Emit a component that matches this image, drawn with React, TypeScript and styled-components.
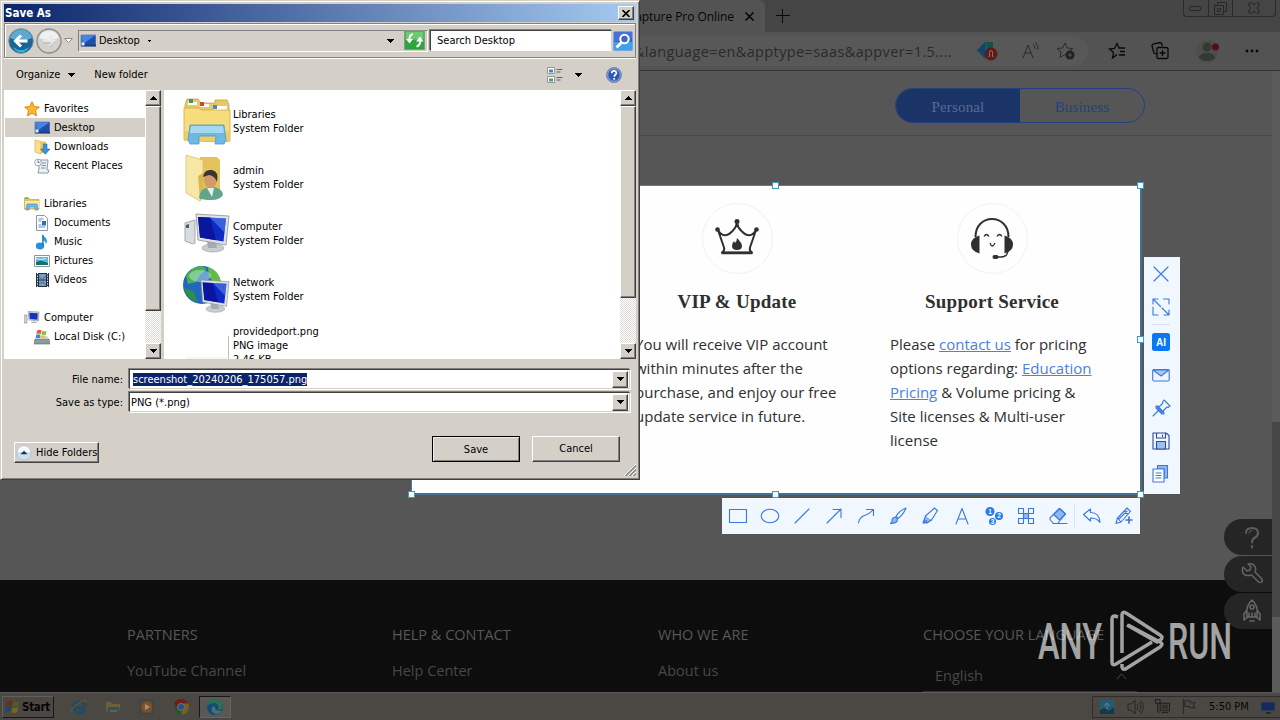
import React from 'react';
import styled, { createGlobalStyle } from 'styled-components';

interface IconProps {
  name: string;
  size?: number;
}

interface TreeItem {
  label: string;
  icon: string;
  level: number;
  active?: boolean;
  spaced?: boolean;
}

interface FileItem {
  name: string;
  kind: string;
  size?: string;
  icon: string;
}

const GlobalStyle = createGlobalStyle`
* { box-sizing: border-box; }
body { margin: 0; background: #565656; overflow: hidden; }
svg { display: block; flex: none; }
`;

const ui = `font-family: "DejaVu Sans Condensed", "DejaVu Sans", sans-serif; font-stretch: condensed;`;

/* ---------- browser ---------- */

const Screen = styled.div`
position: relative;
width: 1280px;
height: 720px;
overflow: hidden;
display: flex;
flex-direction: column;
background: #565656;
font-family: "Open Sans", sans-serif;
`;

const TabBar = styled.div`
display: flex;
height: 32px;
background: #454545;
justify-content: space-between;
`;

const Tab = styled.div`
display: flex;
align-items: center;
justify-content: flex-end;
gap: 10px;
width: 765px;
padding-right: 10px;
background: #535353;
border-top-right-radius: 6px;
font-size: 12px;
letter-spacing: -0.05px;
color: #050505;
white-space: nowrap;
`;

const NewTab = styled.div`
flex: 1;
padding: 8px 0 0 10px;
`;

const WindowButtons = styled.div`
display: flex;
width: 93px;
height: 17px;
margin-right: 4px;
border: 1px solid #2b2b2b;
border-top: 0;
border-radius: 0 0 4px 4px;
`;

const WindowButton = styled.div<{ $width: number }>`
display: flex;
align-items: center;
justify-content: center;
width: ${props => props.$width}px;
border-right: 1px solid #2b2b2b;
&:last-child { border-right: 0; }
`;

const AddressBar = styled.div`
display: flex;
align-items: center;
height: 39px;
background: #535353;
border-bottom: 1px solid #343434;
`;

const AddressField = styled.div`
display: flex;
align-items: center;
width: 1088px;
height: 30px;
background: #585858;
border-radius: 15px;
`;

const Url = styled.div`
width: 952px;
text-align: right;
font-size: 14.5px;
letter-spacing: 0.38px;
color: #2a2a2a;
white-space: nowrap;
`;

const IconSlot = styled.div<{ $left: number }>`
margin-left: ${props => props.$left}px;
`;

const Viewport = styled.div`
display: flex;
flex: 1;
min-height: 0;
`;

const Site = styled.div`
display: flex;
flex-direction: column;
width: 1272px;
`;

const ScrollTrack = styled.div`
width: 8px;
padding-top: 351px;
background: #5b5b5b;
`;

const ScrollThumb = styled.div`
height: 195px;
background: #474747;
`;

const SiteHeader = styled.div`
display: flex;
justify-content: flex-end;
height: 65px;
padding: 17px 127px 0 0;
border-bottom: 1px solid #4a4a4a;
`;

const PlanSwitch = styled.div`
display: flex;
width: 250px;
height: 35px;
border: 1px solid #25407f;
border-radius: 18px;
overflow: hidden;
`;

const PlanOption = styled.div<{ $active?: boolean }>`
flex: 1;
line-height: 37px;
text-align: center;
font-family: "Liberation Serif", serif;
font-size: 15px;
letter-spacing: 0.15px;
color: ${props => (props.$active ? '#576a91' : '#25407f')};
background: ${props => (props.$active ? '#1b3468' : 'transparent')};
`;

const SiteBody = styled.div`
flex: 1;
`;

const Footer = styled.div`
display: grid;
grid-template-columns: 265px 266px 265px 214px;
height: 112px;
padding: 43px 0 0 127px;
background: #0d0d0d;
`;

const FooterColumn = styled.div`
display: flex;
flex-direction: column;
font-size: 14.5px;
line-height: 24px;
color: #484848;
white-space: nowrap;
`;

const FooterTitle = styled.div`
margin-bottom: 12px;
color: #575757;
`;

const Language = styled.div`
display: flex;
justify-content: space-between;
align-items: center;
margin-top: 5px;
padding: 0 10px 3px 12px;
border-bottom: 1px solid #343434;
`;

const Taskbar = styled.div`
display: flex;
align-items: center;
height: 28px;
padding-left: 2px;
background: #4b4844;
border-top: 1px solid #5e5a56;
`;

const StartButton = styled.div`
display: flex;
align-items: center;
width: 52px;
height: 22px;
padding-left: 2px;
gap: 1px;
border: 1px solid;
border-color: #625e5a #181715 #181715 #625e5a;
font-family: "DejaVu Sans Condensed", "DejaVu Sans", sans-serif;
font-size: 11.5px;
font-weight: bold;
letter-spacing: -0.3px;
color: #050505;
`;

const QuickLaunch = styled.div`
display: flex;
align-items: center;
gap: 18px;
flex: 1;
padding-left: 17px;
`;

const ActiveTask = styled.div`
display: flex;
align-items: center;
justify-content: center;
width: 32px;
height: 22px;
margin-left: -8px;
background: #5a5855;
border: 1px solid;
border-color: #181715 #66625e #66625e #181715;
`;

const Tray = styled.div`
display: flex;
align-items: center;
width: 188px;
height: 22px;
padding-left: 6px;
gap: 11px;
border: 1px solid #2f2d2b;
border-right: 0;
${ui}
font-size: 11px;
color: #050505;
white-space: nowrap;
`;

const TrayClock = styled.span`
margin: 0 0 0 2px;
`;

const SideButtons = styled.div`
position: absolute;
top: 519px;
right: 8px;
display: flex;
flex-direction: column;
gap: 1px;
`;

const SideButton = styled.div`
display: flex;
align-items: center;
justify-content: center;
width: 48px;
height: 36px;
padding-left: 7px;
background: #252525;
border-radius: 18px 0 0 18px;
`;

const Watermark = styled.div`
position: absolute;
left: 1036px;
top: 608px;
opacity: 0.62;
`;

/* ---------- capture area ---------- */

const Capture = styled.div`
position: absolute;
left: 411px;
top: 185px;
width: 731px;
height: 310px;
display: grid;
grid-template-columns: 255px 204px;
padding: 17px 0 0 223px;
background: #fefefe;
border: 1px solid #3b86b3;
border-right: 2px solid #3f7292;
border-bottom: 2px solid #3f7292;
`;

const Handle = styled.div<{ $x: number; $y: number }>`
position: absolute;
left: ${props => props.$x - 3}px;
top: ${props => props.$y - 3}px;
width: 7px;
height: 7px;
background: #f4feff;
border: 1px solid #4796ba;
`;

const Feature = styled.div`
display: flex;
flex-direction: column;
align-items: center;
width: 204px;
`;

const FeatureIcon = styled.div`
display: flex;
align-items: center;
justify-content: center;
width: 71px;
height: 71px;
border: 1px solid #f1f1f1;
border-radius: 50%;
`;

const FeatureTitle = styled.h3`
margin: 16px 0 18px;
line-height: 24px;
font-family: "Liberation Serif", serif;
font-size: 19px;
letter-spacing: 0.25px;
color: #2f2f2f;
white-space: nowrap;
`;

const FeatureText = styled.p`
margin: 0;
width: 210px;
align-self: flex-start;
font-size: 15px;
line-height: 24px;
color: #2f2f2f;
white-space: nowrap;
a { color: #4a80e2; text-decoration: underline; }
`;

const Tools = styled.div<{ $vertical?: boolean }>`
position: absolute;
left: ${props => (props.$vertical ? 1144 : 722)}px;
top: ${props => (props.$vertical ? 257 : 498)}px;
width: ${props => (props.$vertical ? 36 : 418)}px;
height: ${props => (props.$vertical ? 237 : 36)}px;
display: flex;
flex-direction: ${props => (props.$vertical ? 'column' : 'row')};
background: #f0f7fe;
`;

const Tool = styled.div<{ $vertical?: boolean }>`
display: flex;
align-items: center;
justify-content: center;
width: ${props => (props.$vertical ? 34 : 32)}px;
height: ${props => (props.$vertical ? 33 : 36)}px;
`;

const ToolDivider = styled.div<{ $vertical?: boolean }>`
width: ${props => (props.$vertical ? '18px' : '1px')};
height: ${props => (props.$vertical ? '1px' : '24px')};
margin: ${props => (props.$vertical ? '1px 8px 0' : '6px 1px 0 0')};
background: #dbe4ee;
`;

/* ---------- save dialog ---------- */

const Dialog = styled.div`
position: absolute;
left: 0;
top: 0;
width: 640px;
height: 480px;
display: flex;
flex-direction: column;
padding: 2px;
background: #d4d0c8;
border: 1px solid;
border-color: #d4d0c8 #404040 #404040 #d4d0c8;
box-shadow: inset 1px 1px 0 #fff, inset -1px -1px 0 #808080;
${ui}
font-size: 11px;
color: #000;
white-space: nowrap;
`;

const TitleBar = styled.div`
display: flex;
align-items: center;
justify-content: space-between;
height: 18px;
margin: 1px 1px 0;
padding: 0 2px 0 1px;
background: linear-gradient(90deg, #0a246a, #a6caf0);
color: #fff;
font-weight: bold;
font-size: 11.5px;
`;

const raised = `
background: #d4d0c8;
border: 1px solid;
border-color: #fff #404040 #404040 #fff;
box-shadow: inset -1px -1px 0 #808080;
`;

const CloseButton = styled.div`
display: flex;
align-items: center;
justify-content: center;
width: 16px;
height: 14px;
${raised}
`;

const NavBar = styled.div`
display: flex;
align-items: center;
height: 35px;
margin: 1px 1px 0;
border: 1px solid #808080;
border-bottom-color: #808080;
box-shadow: 0 1px 0 #fff, inset 1px 1px 0 #fff;
padding-left: 3px;
`;

const PathBox = styled.div`
display: flex;
align-items: center;
width: 350px;
height: 22px;
margin-left: 5px;
padding-left: 1px;
border: 1px solid;
border-color: #808080 #fff #fff #808080;
`;

const PathLabel = styled.span`
margin: 0 7px 0 3px;
`;

const PathDrop = styled.div`
margin-left: auto;
padding-right: 33px;
`;

const NavButton = styled.div<{ $left: number }>`
margin-left: ${props => props.$left}px;
`;

const SearchBox = styled.div`
width: 182px;
height: 21px;
margin-left: 5px;
padding-left: 6px;
line-height: 19px;
background: #fff;
border: 1px solid;
border-color: #404040 #d4d0c8 #fff #404040;
box-shadow: -1px -1px 0 #808080;
`;

const CommandBar = styled.div`
display: flex;
align-items: center;
height: 31px;
padding: 0 15px 0 13px;
margin-top: 1px;
`;

const Organize = styled.div`
display: flex;
align-items: center;
gap: 8px;
margin-right: 19px;
`;

const ViewTools = styled.div`
display: flex;
align-items: center;
gap: 12px;
margin-left: auto;
`;

const Panes = styled.div`
display: flex;
height: 269px;
margin: 0 1px;
`;

const Tree = styled.div`
width: 141px;
padding-top: 9px;
background: #fff;
`;

const TreeRow = styled.div<{ $level: number; $active?: boolean; $spaced?: boolean }>`
display: flex;
align-items: center;
gap: 4px;
height: 19px;
margin: ${props => (props.$spaced ? 19 : 0)}px 0 0 1px;
padding-left: ${props => (props.$level ? 29 : 19)}px;
background: ${props => (props.$active ? '#d4d0c8' : 'transparent')};
`;

const Scrollbar = styled.div`
display: flex;
flex-direction: column;
width: 16px;
background: repeating-conic-gradient(#fff 0 25%, #dedbd5 0 50%) 0 0 / 2px 2px;
`;

const ScrollArrow = styled.div`
display: flex;
align-items: center;
justify-content: center;
width: 16px;
height: 16px;
${raised}
`;

const ScrollGrip = styled.div<{ $height: number }>`
width: 16px;
height: ${props => props.$height}px;
margin-bottom: auto;
${raised}
`;

const FileList = styled.div`
width: 457px;
margin-left: 2px;
padding: 4px 0 0 19px;
background: #fff;
border-left: 1px solid #d4d0c8;
overflow: hidden;
`;

const FileRow = styled.div`
display: flex;
align-items: center;
gap: 2px;
height: 56px;
line-height: 14px;
`;

const Form = styled.div`
display: flex;
flex-direction: column;
gap: 3px;
padding: 10px 7px 0 11px;
`;

const FormRow = styled.div`
display: flex;
align-items: center;
justify-content: flex-end;
gap: 6px;
`;

const Combo = styled.div`
display: flex;
align-items: center;
justify-content: space-between;
width: 501px;
height: 20px;
padding: 0 1px 0 1px;
background: #fff;
border: 1px solid;
border-color: #404040 #d4d0c8 #d4d0c8 #404040;
box-shadow: -1px -1px 0 #808080, 1px 1px 0 #fff;
`;

const ComboButton = styled.div`
display: flex;
align-items: center;
justify-content: center;
width: 16px;
height: 17px;
${raised}
`;

const Selected = styled.span`
margin-left: 2px;
line-height: 13px;
background: #0a246a;
color: #fff;
`;

const Actions = styled.div`
display: flex;
align-items: flex-start;
gap: 12px;
padding: 24px 17px 0 11px;
`;

const HideFolders = styled.div`
display: flex;
align-items: center;
gap: 4px;
width: 85px;
height: 21px;
margin: 6px auto 0 0;
padding-left: 1px;
${raised}
`;

const ActionButton = styled.div<{ $primary?: boolean }>`
width: 88px;
height: 26px;
line-height: ${props => (props.$primary ? 26 : 24)}px;
text-align: center;
${raised}
${props => props.$primary && 'border-color: #000; box-shadow: inset 1px 1px 0 #eee, inset -1px -1px 0 #808080;'}
`;

const Grip = styled.div`
position: absolute;
right: 3px;
bottom: 3px;
`;

/* ---------- icons ---------- */

const blue = '#3b78de';

const Arrow = ({ up, small }: { up?: boolean; small?: boolean }) => (
  <svg width={small ? 5 : 7} height="4" viewBox="0 0 8 4" shapeRendering="crispEdges">
    <path d={up ? 'M0 4h8L4 0z' : 'M0 0h8L4 4z'} fill="#000" />
  </svg>
);

const Monitor = ({ x = 0, y = 0 }: { x?: number; y?: number }) => (
  <g transform={`translate(${x} ${y})`}>
    <ellipse cx="22" cy="34" rx="11" ry="4" fill="#c9ccd0" stroke="#979ba1" strokeWidth=".6" />
    <path d="M16 27l9 1 1 6H17z" fill="#a6abb2" />
    <path d="M5 0l33 2-3 29-28-5z" fill="#dfe2e5" stroke="#8d9198" strokeWidth=".8" />
    <path d="M7 3l28 1.500-2.500 23L9 23.500z" fill="#0d2bc4" />
    <path d="M7 3l12 .6 6 22.700L9 23.500z" fill="#0a169e" />
    <path d="M19 3.600l16 .9-1.500 14z" fill="#5d83ec" opacity=".6" />
  </g>
);

// each entry: [native size, drawing]
const icons: Record<string, [number, React.ReactNode]> = {
  desktop: [16, <>
    <path d="M1 2h15v11H1z" fill="#1d50ad" stroke="#7893b9" />
    <path d="M1.500 2.500H15L3 11z" fill="#4686e0" />
    <path d="M1 11.500h15v2H1z" fill="#223d70" />
    <path d="M1.500 9.500h3v3h-3z" fill="#d8edff" />
  </>],
  star: [16, <path d="M8 .7l2.200 4.800 5.200.6-3.900 3.500 1.100 5.300L8 12.200l-4.600 2.700 1.100-5.300L.6 6.100l5.200-.6z" fill="#fbb62d" stroke="#d98b1c" />],
  downloads: [16, <>
    <path d="M1 1l6 1.500V15l-6-2z" fill="#f8e08a" stroke="#cda63c" strokeWidth=".6" />
    <path d="M7 2.500h5V14H7z" fill="#e8c456" />
    <path d="M9.500 5h3.500v5h3l-4.700 5.300L6.600 10h2.900z" fill="#3a93df" stroke="#1f67ad" strokeWidth=".6" />
  </>],
  recent: [16, <>
    <path d="M5 2h9l-1 10h2l-1 3H4l1-4z" fill="#eef1f4" stroke="#8b9aa8" />
    <path d="M7.500 5h4.500M7.500 7.500h4.500M7 10h4.500" stroke="#6d93b8" />
    <circle cx="4" cy="4.500" r="3.300" fill="#fff" stroke="#9aa3ad" />
    <path d="M4 2.500v2h1.500" stroke="#4b5e73" fill="none" />
  </>],
  libraries: [16, <>
    <path d="M0 2h5l1 1.500h9V13H0z" fill="#eac85c" stroke="#b79442" strokeWidth=".6" />
    <path d="M1 5h14v7H1z" fill="#f8e9a2" />
    <path d="M1 1.500h3v1.200H1z" fill="#4ca04c" />
    <path d="M3 8h10l1 6h-3v-3H5v3H2z" fill="#72b8e4" stroke="#3a86bd" strokeWidth=".6" />
  </>],
  documents: [16, <>
    <path d="M2.500.5h8l3 3v12h-11z" fill="#fff" stroke="#8598b0" />
    <path d="M4.500 4h5M4.500 6h3M4.500 10h3M4.500 12h7" stroke="#6d8fb8" />
    <path d="M8 6h4v4.500H8z" fill="#2c6fba" />
  </>],
  music: [16, <>
    <path d="M8 0c1 3 5 3 5 7 0 1.500-.6 2.400-1.500 3C12 7.500 10 6.500 9.200 6.500V12z" fill="#2f9ae2" />
    <ellipse cx="6" cy="12" rx="4.200" ry="3.400" fill="#2b8ed8" />
    <path d="M8.300 1h1.300v11H8.300z" fill="#1d72b8" />
  </>],
  pictures: [16, <>
    <path d="M.5 2.500h15v11H.5z" fill="#fff" stroke="#8598a8" />
    <path d="M2 4h12v8H2z" fill="#5cb7e4" />
    <path d="M2 9l5-1.500 7 2.500v2H2z" fill="#1b6f6b" />
    <path d="M2 5.500l5 1 5-1" stroke="#d9f2fb" fill="none" />
  </>],
  videos: [16, <>
    <path d="M2 1h13v14H2z" fill="#24303f" />
    <path d="M5 2h7v5.500H5zM5 8.500h7V14H5z" fill="#5fa5d9" />
    <path d="M5 5l3 2.500L12 4M5 12l4-2 3 3" stroke="#a84e41" fill="none" />
    <path d="M3.500 1v14M13.500 1v14" stroke="#e5eaf0" strokeDasharray="1.300 1.300" />
  </>],
  computer: [16, <>
    <path d="M0 5h3v8H0z" fill="#cfd5dc" stroke="#7f8790" strokeWidth=".6" />
    <path d="M4 1.500l11 .5-.5 9L5 10z" fill="#d4dae0" stroke="#818992" strokeWidth=".6" />
    <path d="M5.300 2.800l8.500.4-.4 6.500-7.600-.7z" fill="#1534bb" />
    <path d="M7 13c0-2 6-2 6 0z" fill="#b2b9c0" />
  </>],
  disk: [16, <>
    <path d="M1 10h14l1 5H0z" fill="#8d9aa0" stroke="#596468" strokeWidth=".6" />
    <path d="M1 10l3-3h9l2 3z" fill="#c9d2d5" />
    <path d="M3 1.500q2.500-1.500 4.500 0L6.800 5q-2-1.200-4.400 0z" fill="#e8582b" />
    <path d="M8.200 1.800q2 1 4.300 0L11.800 5.400q-2.300 1-4.300 0z" fill="#8abf34" />
    <path d="M2.200 5.800q2-1.200 4.300 0L5.800 9H1.700z" fill="#3c8ad8" />
    <path d="M7.300 6q2 1 4.300 0L11 9H6.800z" fill="#f6c32d" />
    <path d="M11 12h3v1.500h-3z" fill="#56c040" />
  </>],
  back: [26, <>
    <circle cx="13" cy="13" r="12.300" fill="#1b6596" stroke="#7d95a5" />
    <path d="M2 10a11.300 11.300 0 0 1 22 0q-11 5-22 0z" fill="#5fa8cf" />
    <path d="M5 19q8 7 16 0-3 5-8 5t-8-5z" fill="#35cdf3" />
    <path d="M19.500 13H8.500M13 7.500L7.500 13l5.500 5.500" stroke="#fff" strokeWidth="3" fill="none" />
  </>],
  forward: [26, <>
    <circle cx="13" cy="13" r="12" fill="#d3d2cf" stroke="#8f8f8d" strokeWidth="1.500" />
    <path d="M3 10a10.500 10.500 0 0 1 20 0q-10 4-20 0z" fill="#f0f0ef" />
    <path d="M7 13h11M13.500 8l5 5-5 5" stroke="#e9e9e8" strokeWidth="2.600" fill="none" />
    <path d="M7 15h8M14 19l5.500-6" stroke="#b2b2b0" fill="none" />
  </>],
  refresh: [21, <>
    <path d="M.5.5h20v19H.5z" fill="#2ea63c" stroke="#8a988a" />
    <path d="M1.500 1.500h18v8h-18z" fill="#6ccb70" />
    <path d="M9 4q-4 1-3.500 6M12.500 16.500q4-1 3.500-6" stroke="#fff" strokeWidth="2" fill="none" />
    <path d="M2 9h7l-3.500 4.500zM12 11.500h7.500L16 6.500z" fill="#fff" />
  </>],
  search: [20, <>
    <rect x=".5" y=".5" width="19" height="19" rx="1.500" fill="#2f69cf" stroke="#7ba2dd" />
    <path d="M1 11h18v8H1z" fill="#3ba3ec" />
    <path d="M1 1h18v6L1 11z" fill="#4b70d4" />
    <circle cx="11.500" cy="8" r="4.200" fill="#3a67c8" stroke="#fff" strokeWidth="2" />
    <path d="M8.500 11.500l-5 5" stroke="#fff" strokeWidth="2.800" />
  </>],
  views: [16, <>
    <path d="M.5.500h7v6h-7zM.5 9.500h7v6h-7z" fill="#fff" stroke="#8b98a8" />
    <path d="M2 2.500h4v3H2z" fill="#4686b8" />
    <path d="M2 11.500h4v3H2z" fill="#5e9a52" />
    <path d="M9.500 2.500h6M9.500 5h4M9.500 10.500h6M9.500 13h4" stroke="#5c646e" />
  </>],
  help: [16, <>
    <circle cx="8" cy="8" r="7.500" fill="#2c57b8" stroke="#7d8da8" />
    <circle cx="8" cy="8" r="6.300" fill="none" stroke="#b9cbe9" strokeWidth=".8" />
    <path d="M5.700 6.200C5.700 3.200 10.500 3.300 10.400 6 10.300 7.800 8.200 7.700 8.200 9.700M8.200 11v1.700" stroke="#fff" strokeWidth="1.700" fill="none" />
  </>],
  libraryBig: [48, <>
    <path d="M2 7l2-6h11l3 4h14V2h12l2 5v12H2z" fill="#e9c868" stroke="#bb9841" strokeWidth=".7" />
    <path d="M5 4h9v3H5zM17 6h9v3h-9zM30 8h14v4H30z" fill="#fff" />
    <path d="M6 1h4v4H6z" fill="#3f9a52" /><path d="M17 4h4v4h-4z" fill="#cf4634" /><path d="M30 7h4v4h-4z" fill="#438ac0" />
    <path d="M1 10h15l3 2h28v31q-8 2-46-1z" fill="#f6dd7b" stroke="#cfa945" strokeWidth=".8" />
    <path d="M2 33h44v10H2z" fill="#e9c553" opacity=".6" />
    <path d="M7 27h34l2 15-2 4h-9l1-8H16v8H7l-2-4z" fill="#6cb9e6" stroke="#4e9bca" strokeWidth=".8" />
    <path d="M8 28h32l1 7H7z" fill="#b4e0f6" opacity=".8" />
  </>],
  adminBig: [48, <>
    <path d="M17 3h16q4 1 4 5v36H17z" fill="#e5c35c" />
    <path d="M3 1l17 5v36l-3 5L3 39z" fill="#f7e7a6" stroke="#d8ba61" strokeWidth=".7" />
    <path d="M15 22l5-3v24l-3 4z" fill="#dcb64f" />
    <path d="M16 44q1-11 12-11 11 0 12 8-3 5-12 5-8 0-12-2z" fill="#60a58c" />
    <path d="M24 34h7l-2 9z" fill="#e9efe9" />
    <ellipse cx="27.500" cy="26" rx="6.500" ry="8" fill="#d19b6c" />
    <path d="M20 23q1-8 9-7 7 1 5 12-2-6-8-7z" fill="#3c3532" />
  </>],
  computerBig: [48, <>
    <path d="M2 13l10-3v23l-2 1-8-3z" fill="#d9dcdf" stroke="#878c93" strokeWidth=".7" />
    <path d="M3 15l3-1v4H3z" fill="#555b62" />
    <Monitor x={8} y={4} />
  </>],
  networkBig: [48, <>
    <circle cx="19" cy="19" r="19" fill="#1f68bd" />
    <path d="M3 10Q9 0 19 0l5 3-7 6-4 7-8 2z" fill="#4bb04d" />
    <path d="M25 1q11 4 13 15l-7 2-5-8z" fill="#63bd45" />
    <path d="M1 22l9 3 5 11q-11-2-14-14z" fill="#2f8f47" />
    <ellipse cx="17" cy="10" rx="11" ry="6" fill="#c9eef9" opacity=".45" />
    <g transform="translate(12 14) scale(.85)"><Monitor x={2} y={0} /></g>
  </>],
  fileBig: [48, <>
    <path d="M2 12h43v25H2z" fill="#fff" />
    <path d="M2 37.500h43.500V14" stroke="#bfbfbf" fill="none" />
    <path d="M3 36h41" stroke="#eee" />
  </>],
  hide: [18, <>
    <circle cx="9" cy="9" r="8" fill="#cfe0f0" stroke="#a8b8c8" strokeWidth=".7" />
    <path d="M2 8a7 7 0 0 1 14 0z" fill="#f6fafd" />
    <path d="M5 10.500h8L9 6.500z" fill="#163653" />
  </>],
  crown: [44, <>
    <g fill="none" stroke="#303030" strokeWidth="2">
      <path d="M3 13q6 10 14.500 1Q21 11 22 6q1 5 4.500 8 8.500 9 14.500-1l-6 17.500q-1 3 2 5H7q3-2 2-5z" strokeLinejoin="round" />
    </g>
    <path d="M6.500 36h31" stroke="#303030" strokeWidth="2.500" />
    <circle cx="22" cy="4.500" r="2.500" fill="#303030" /><circle cx="2.500" cy="12.500" r="2.300" fill="#303030" /><circle cx="41.500" cy="12.500" r="2.300" fill="#303030" />
    <path d="M22 21q5 5 5 8 0 4-5 4t-5-4q0-3 2-5l1 2q2-2 2-5z" fill="#303030" />
  </>],
  support: [44, <>
    <path d="M5.500 20C5.500-4 38.500-4 38.500 20" fill="none" stroke="#303030" strokeWidth="2" />
    <path d="M9.500 18.500v18Q1 34 1 27.500t8.500-9zM34.500 18.500v18Q43 34 43 27.500t-8.500-9z" fill="#303030" />
    <path d="M14 19.500q2.500-4 5 0M27 19.500q2.500-4 5 0M20 26q2 6 5 0" fill="none" stroke="#303030" strokeWidth="1.300" />
    <path d="M38 34q-1 6-7 6h-6" fill="none" stroke="#303030" strokeWidth="1.500" />
    <rect x="22.500" y="38" width="6" height="4" rx="2" fill="#303030" />
  </>],
  rect: [20, <path d="M1.500 3.500h17v13h-17z" />],
  ellipse: [20, <ellipse cx="10" cy="10" rx="8.800" ry="6.700" />],
  line: [20, <path d="M3 17L17 3" />],
  arrow: [20, <path d="M3 17L17 3M9 3.500h8v8" />],
  curve: [20, <path d="M2.500 17q1-6 6-7.500T17 4M10.500 3.500H17.500v6" />],
  brush: [20, <>
    <path d="M18 2q-7 3-10 8.500l2 2Q15 9 18 2z" />
    <path d="M7.500 11l2 2.500q0 4-7 4 1.500-1 1.500-3 0-3 3.500-3.500z" fill="#8bb8f5" />
  </>],
  marker: [20, <>
    <path d="M14.500 2l3 2.500-6 9.500-5.500.5-.5-4.500z" />
    <path d="M5.500 10L3 17h4l4.500-3M3 16l3-1.500 1 2z" fill="#8bb8f5" />
  </>],
  letter: [20, <path d="M4 18l6-15.500L16 18M6 13h8" />],
  numbers: [20, <g stroke="none" fill="#2878e8">
    <circle cx="6" cy="5.500" r="4.500" /><circle cx="15" cy="10" r="4" /><circle cx="8.500" cy="15.500" r="3.500" />
    <g fill="#fff" fontFamily="Liberation Sans, sans-serif" fontWeight="bold" fontSize="6.500" textAnchor="middle">
      <text x="6" y="8">1</text><text x="15" y="12.300">2</text><text x="8.500" y="17.800">3</text>
    </g>
  </g>],
  mosaic: [20, <>
    <path d="M7.500 7.500h5v5h-5z" fill="#8bb8f5" />
    <path d="M2.500 2.500h5v5h-5zM12.500 2.500h5v5h-5zM2.500 12.500h5v5h-5zM12.500 12.500h5v5h-5z" />
  </>],
  eraser: [20, <>
    <path d="M11.500 2.500l6 5.500-6 6-6-5.500z" fill="#8bb8f5" />
    <path d="M11.500 2.500l6 5.500-8 9.500h-4l-3.500-4v-1.500zM5 17.500h14" />
  </>],
  undo: [20, <path d="M1.500 8.500L8.500 3v3.500q9 0 9.500 10-3-4.500-9.500-4.500v3z" />],
  pencil: [20, <>
    <path d="M13 2l3.500 3.500L7 16l-5 1.500L3.500 12zM3.500 12L7 16M10.500 5l3.500 3.500M5 13l8-8" />
    <path d="M15 11v6M12 14h6" strokeWidth="1.700" />
  </>],
  close: [20, <path d="M3 3l14 14M17 3L3 17" />],
  expand: [20, <path d="M2 7V2h5M13 2h5v5M18 13v5h-5M7 18H2v-5M2.500 2.500l7 7M11 11l6.500 6.500M12.500 2H18M2 10v6" strokeDasharray="none" />],
  ai: [20, <>
    <rect x="1" y="1" width="18" height="18" rx="2.500" fill="#0878f5" stroke="none" />
    <text x="10" y="13.800" fontFamily="Liberation Sans, sans-serif" fontSize="10" fontWeight="bold" fill="#fff" stroke="none" textAnchor="middle">AI</text>
  </>],
  mail: [20, <>
    <rect x="1.700" y="4.500" width="16.500" height="11.500" rx="1.500" />
    <path d="M2 5h16l-8 6z" fill="#a9c9f7" />
  </>],
  pin: [20, <>
    <path d="M12 2l6 6-2 1.500-1-.5-3.500 3.500.5 3.500-2 0-6-6v-2l3.500.5L11 5l-.5-1z" transform="translate(1 0)" />
    <path d="M6.500 8l6 6-1 1-5.500-5.500zM7.500 12.500L2 18" fill="#6ba3f0" />
  </>],
  save: [20, <g stroke="#294f9a">
    <path d="M2 2h13l3 2.500V18H2zM5.500 2v5h9V2M11.500 4v1.500" />
    <path d="M5.500 10.500h9V18h-9z" fill="#9ec1f4" />
  </g>],
  copy: [20, <>
    <path d="M6.500 5V1.500h10v12.500H13V5z" fill="#8bb8f5" />
    <path d="M2 5h11v13H2z" fill="#fff" />
    <path d="M5 9h5M5 11.500h5M5 14h5" />
  </>],
  question: [24, <g stroke="#5d5d5d" strokeWidth="2"><path d="M6 8Q6 3 12 3q6 0 6 5 0 3-3 4.500-3 1.500-3 5M12 21v1.500" /><path d="M9 8q0-2.500 3-2.500" strokeWidth="1" /></g>],
  wrench: [24, <path d="M3 5l4 4 3-1 1-3-3-3q6-1 7.500 4 .5 2-.5 4l7 7q1 2-.5 3t-3 0l-7-7Q4 15 2.500 10 2 7 3 5z" stroke="#646464" strokeWidth="1.500" />],
  rocket: [24, <g stroke="#686868" strokeWidth="1.500">
    <path d="M12 1Q6 6 7 15v3h10v-3q1-9-5-14zM7 11l-3 4v6l4-3M17 11l3 4v6l-4-3M9 18v-4M12 18v-4M15 18v-4" /><circle cx="12" cy="8" r="2" /><path d="M10 22h4" />
  </g>],
  windows: [16, <>
    <path d="M2 2q3-1.500 5.500 0L6.500 7Q4 5.500 1 7z" fill="#6d2b18" /><path d="M8.500 2.500q3 1 6-.5l-1 5q-3 1.500-6 .5z" fill="#486023" />
    <path d="M.8 8q3-1.500 5.500 0l-1 5q-3-1.500-5.500 0z" fill="#244368" /><path d="M7.300 8.500q3 1 6-.5l-1 5q-3 1.500-6 .5z" fill="#7a6422" />
  </>],
  ie: [16, <>
    <path d="M14 9H4.500M14 9q0-6-6-6-5.500 0-5.500 5.500T8 14q4 0 5.500-3" stroke="#1c4c68" strokeWidth="2.500" fill="none" />
    <path d="M1 13Q-1 9 8 4t7-1" stroke="#6d5d25" fill="none" />
  </>],
  explorer: [16, <>
    <path d="M1 3h5l1 2h8v8H1z" fill="#6b6138" /><path d="M3 8h11l1 5h-3v-2H5v2H2z" fill="#2d5267" />
  </>],
  media: [16, <>
    <path d="M1 1h13v14H1z" fill="#514a43" stroke="#33414c" /><circle cx="8" cy="8" r="5.500" fill="#82501c" /><path d="M6 5l5 3-5 3z" fill="#9a948a" />
  </>],
  chrome: [16, <>
    <circle cx="8" cy="8" r="7.500" fill="#27562e" /><path d="M1 4.500A7.500 7.500 0 0 1 15 4.500H8L4.500 10z" fill="#6c2019" />
    <path d="M15 4.500A7.500 7.500 0 0 1 7.500 15.500L11.500 9 8 4.500z" fill="#78611b" /><circle cx="8" cy="8" r="3.500" fill="#254f87" stroke="#77756f" />
  </>],
  edge: [18, <>
    <circle cx="9" cy="9" r="8" fill="#124b72" /><path d="M1 8Q2 1 9 1t8 7q0 4-5 4 1-7-4-7-4 0-7 3z" fill="#287255" />
    <path d="M9 8q-1 5 7 5-3 4-7 3-5-2-3-7z" fill="#4d6b74" />
  </>],
  trayApp: [16, <><path d="M1 1h14v14H1z" fill="#235b72" /><path d="M1 11l4-2 5 3 5-4v7H1z" fill="#173848" /><path d="M5 7l3-3 3 3M8 4v6" stroke="#5d8796" fill="none" /></>],
  volume: [18, <path d="M2 6h3l4-4v14l-4-4H2zM11 6q2 3 0 6M13 4q3.500 5 0 10M15 2.500q4.500 6.500 0 13" fill="none" stroke="#262422" />],
  network: [16, <><path d="M5.500 4.500h10v8h-10zM7 14.500h7M.5.500h5v4h-5zM3 5v9h2" fill="none" stroke="#1d1c1a" /><path d="M7 6h7v5H7z" fill="#33312e" /></>],
  flag: [16, <path d="M2.500 0v16M4 2h6v2h5l-2 3 2 2.500H9V8H4z" fill="none" stroke="#242220" />],
  trayDesk: [16, <><path d="M1 3h14v9H1z" fill="#14295c" stroke="#3d4758" /><path d="M6 13h5v2H6z" fill="#2a2826" /></>],
  shop: [22, <>
    <path d="M1 10L9 2v17z" fill="#124567" /><path d="M9 2h8v9H9z" fill="#1b5046" /><path d="M9 2l4 8-4 9z" fill="#16587b" />
    <circle cx="15" cy="14" r="6.500" fill="#5f1b1a" /><path d="M12.500 16.500h1v-4q0-2 1.500-2t1.500 2v4h1" stroke="#8b7070" fill="none" />
  </>],
  readAloud: [18, <path d="M2 16L7 3l5 13M4 11h6M12 2q2 2 2 5M14.500.5q3 3 2.500 7" stroke="#2a2a2a" fill="none" />],
  favAdd: [20, <><path d="M9 2l2.200 5 5.300.5-4 3.500 1 5L9 13.500 4 16.500l1-5.500-4-3.500L6.500 7z" stroke="#2a2a2a" fill="none" /><circle cx="14" cy="14" r="4.500" fill="#222" /><path d="M12 14h4M14 12v4" stroke="#555" /></>],
  favorites: [18, <path d="M9 12.500L4.500 16l1-5.500L1.500 7l5-.5L9 1.500 11 6h6M12 9.500h5M11 13h6" stroke="#080808" strokeWidth="1.300" fill="none" />],
  collections: [18, <path d="M5.500 12L3 11 1 4q0-1.500 1-2l7-1.500q1.500 0 2 1.500v2M7.500 5.500h8q1.500 0 1.500 1.500v8q0 1.500-1.500 1.500h-8Q6 16.500 6 15V7q0-1.500 1.500-1.500zM11.500 8v6M8.500 11h6" stroke="#080808" strokeWidth="1.300" fill="none" />],
  profile: [24, <><circle cx="12" cy="12" r="11.500" fill="#4e4e4d" /><circle cx="12" cy="8" r="4.500" fill="#313a35" /><ellipse cx="12" cy="18" rx="8" ry="4" fill="#313a35" /><circle cx="20.500" cy="8" r="3.500" fill="#550c14" /></>],
  more: [16, <g fill="#080808"><circle cx="3" cy="8" r="1.400" /><circle cx="8" cy="8" r="1.400" /><circle cx="13" cy="8" r="1.400" /></g>],
};

function Icon({ name, size }: IconProps) {
  const [box, drawing] = icons[name];
  const s = size || box;
  return <svg width={s} height={s} viewBox={`0 0 ${box} ${box}`}>{drawing}</svg>;
}

function LineIcon({ name, size }: IconProps) {
  const [box, drawing] = icons[name];
  const s = size || box;
  return (
    <svg width={s} height={s} viewBox={`0 0 ${box} ${box}`} fill="none" stroke={blue} strokeWidth="1.1" strokeLinecap="round" strokeLinejoin="round">
      {drawing}
    </svg>
  );
}

/* ---------- data ---------- */

const tree: TreeItem[] = [
  { label: 'Favorites', icon: 'star', level: 0 },
  { label: 'Desktop', icon: 'desktop', level: 1, active: true },
  { label: 'Downloads', icon: 'downloads', level: 1 },
  { label: 'Recent Places', icon: 'recent', level: 1 },
  { label: 'Libraries', icon: 'libraries', level: 0, spaced: true },
  { label: 'Documents', icon: 'documents', level: 1 },
  { label: 'Music', icon: 'music', level: 1 },
  { label: 'Pictures', icon: 'pictures', level: 1 },
  { label: 'Videos', icon: 'videos', level: 1 },
  { label: 'Computer', icon: 'computer', level: 0, spaced: true },
  { label: 'Local Disk (C:)', icon: 'disk', level: 1 },
];

const files: FileItem[] = [
  { name: 'Libraries', kind: 'System Folder', icon: 'libraryBig' },
  { name: 'admin', kind: 'System Folder', icon: 'adminBig' },
  { name: 'Computer', kind: 'System Folder', icon: 'computerBig' },
  { name: 'Network', kind: 'System Folder', icon: 'networkBig' },
  { name: 'providedport.png', kind: 'PNG image', size: '2.46 KB', icon: 'fileBig' },
];

const drawTools = ['rect', 'ellipse', 'line', 'arrow', 'curve', 'brush', 'marker', 'letter', 'numbers', 'mosaic', 'eraser', '|', 'undo', 'pencil'];
const sideTools = ['close', 'expand', '|', 'ai', 'mail', 'pin', 'save', 'copy'];
const handles = [[363, -1], [728, -1], [728, 153], [728, 308], [363, 308], [-1, 308]];

/* ---------- parts ---------- */

function Browser() {
  return (
    <>
      <TabBar>
        <Tab>
          Capture Pro Online
          <svg width="11" height="11" viewBox="0 0 11 11"><path d="M1.500 1.500l8 8M9.500 1.500l-8 8" stroke="#050505" strokeWidth="1.600" /></svg>
        </Tab>
        <NewTab>
          <svg width="15" height="15" viewBox="0 0 15 15"><path d="M7.500 1v14M1 7.500h14" stroke="#0b0b0b" /></svg>
        </NewTab>
        <WindowButtons>
          <WindowButton $width={25}><svg width="13" height="5" viewBox="0 0 13 5"><rect x=".5" y=".5" width="11" height="4" rx="1.500" fill="none" stroke="#262626" /></svg></WindowButton>
          <WindowButton $width={25}><svg width="13" height="13" viewBox="0 0 13 13"><path d="M3.500 3V.5h9v9H10M.5 3.500h9v9h-9zM3.500 6.500h3v3h-3z" fill="none" stroke="#262626" /></svg></WindowButton>
          <WindowButton $width={42}><svg width="12" height="12" viewBox="0 0 12 12"><path d="M1 1h3l2 2 2-2h3v3L9 6l2 2v3H8L6 9l-2 2H1V8l2-2-2-2z" fill="none" stroke="#262626" /></svg></WindowButton>
        </WindowButtons>
      </TabBar>
      <AddressBar>
        <AddressField>
          <Url>id=47&amp;language=en&amp;apptype=saas&amp;appver=1.5....</Url>
          <IconSlot $left={24}><Icon name="shop" /></IconSlot>
          <IconSlot $left={23}><Icon name="readAloud" /></IconSlot>
          <IconSlot $left={17}><Icon name="favAdd" /></IconSlot>
        </AddressField>
        <IconSlot $left={20}><Icon name="favorites" /></IconSlot>
        <IconSlot $left={25}><Icon name="collections" /></IconSlot>
        <IconSlot $left={26}><Icon name="profile" /></IconSlot>
        <IconSlot $left={25}><Icon name="more" /></IconSlot>
      </AddressBar>
      <Viewport>
        <Site>
          <SiteHeader>
            <PlanSwitch>
              <PlanOption $active>Personal</PlanOption>
              <PlanOption>Business</PlanOption>
            </PlanSwitch>
          </SiteHeader>
          <SiteBody />
          <Footer>
            <FooterColumn><FooterTitle>PARTNERS</FooterTitle>YouTube Channel</FooterColumn>
            <FooterColumn><FooterTitle>HELP &amp; CONTACT</FooterTitle>Help Center</FooterColumn>
            <FooterColumn><FooterTitle>WHO WE ARE</FooterTitle>About us</FooterColumn>
            <FooterColumn>
              <FooterTitle>CHOOSE YOUR LANGUAGE</FooterTitle>
              <Language>
                English
                <svg width="11" height="7" viewBox="0 0 11 7"><path d="M1 6l4.500-5L10 6" fill="none" stroke="#4a4a4a" /></svg>
              </Language>
            </FooterColumn>
          </Footer>
        </Site>
        <ScrollTrack><ScrollThumb /></ScrollTrack>
      </Viewport>
      <Taskbar>
        <StartButton><Icon name="windows" />Start</StartButton>
        <QuickLaunch>
          <Icon name="ie" />
          <Icon name="explorer" />
          <Icon name="media" />
          <Icon name="chrome" />
          <ActiveTask><Icon name="edge" /></ActiveTask>
        </QuickLaunch>
        <Tray>
          <Icon name="trayApp" />
          <Icon name="volume" />
          <Icon name="network" size={15} />
          <Icon name="flag" size={15} />
          <TrayClock>5:50 PM</TrayClock>
          <Icon name="trayDesk" />
        </Tray>
      </Taskbar>
    </>
  );
}

function CaptureArea() {
  return (
    <>
      <Capture>
        <Feature>
          <FeatureIcon><Icon name="crown" /></FeatureIcon>
          <FeatureTitle>VIP &amp; Update</FeatureTitle>
          <FeatureText>
            You will receive VIP account<br />
            within minutes after the<br />
            purchase, and enjoy our free<br />
            update service in future.
          </FeatureText>
        </Feature>
        <Feature>
          <FeatureIcon><Icon name="support" /></FeatureIcon>
          <FeatureTitle>Support Service</FeatureTitle>
          <FeatureText>
            Please <a>contact us</a> for pricing<br />
            options regarding: <a>Education</a><br />
            <a>Pricing</a> &amp; Volume pricing &amp;<br />
            Site licenses &amp; Multi-user<br />
            license
          </FeatureText>
        </Feature>
        {handles.map(([x, y]) => <Handle key={`${x}-${y}`} $x={x} $y={y} />)}
      </Capture>
      <Tools>
        {drawTools.map(name => (name === '|' ? <ToolDivider key={name} /> : <Tool key={name}><LineIcon name={name} /></Tool>))}
      </Tools>
      <Tools $vertical>
        {sideTools.map(name => (name === '|' ? <ToolDivider $vertical key={name} /> : <Tool $vertical key={name}><LineIcon name={name} /></Tool>))}
      </Tools>
    </>
  );
}

function SaveDialog() {
  return (
    <Dialog>
      <TitleBar>
        Save As
        <CloseButton>
          <svg width="8" height="7" viewBox="0 0 8 7"><path d="M.5 0l7 7M7.500 0l-7 7" stroke="#000" strokeWidth="1.600" /></svg>
        </CloseButton>
      </TitleBar>
      <NavBar>
        <Icon name="back" />
        <NavButton $left={2}><Icon name="forward" /></NavButton>
        <NavButton $left={2}>
          <svg width="9" height="5" viewBox="0 0 9 5"><path d="M.5.500h8l-4 4z" fill="#fff" stroke="#8c8c8a" /></svg>
        </NavButton>
        <PathBox>
          <Icon name="desktop" />
          <PathLabel>Desktop</PathLabel>
          <Arrow small />
          <PathDrop><Arrow /></PathDrop>
        </PathBox>
        <NavButton $left={-24}><Icon name="refresh" /></NavButton>
        <SearchBox>Search Desktop</SearchBox>
        <NavButton $left={1}><Icon name="search" /></NavButton>
      </NavBar>
      <CommandBar>
        <Organize>Organize <Arrow /></Organize>
        New folder
        <ViewTools>
          <Icon name="views" />
          <Arrow />
          <span />
          <Icon name="help" />
        </ViewTools>
      </CommandBar>
      <Panes>
        <Tree>
          {tree.map(item => (
            <TreeRow key={item.label} $level={item.level} $active={item.active} $spaced={item.spaced}>
              <Icon name={item.icon} />{item.label}
            </TreeRow>
          ))}
        </Tree>
        <Scrollbar>
          <ScrollArrow><Arrow up /></ScrollArrow>
          <ScrollGrip $height={205} />
          <ScrollArrow><Arrow /></ScrollArrow>
        </Scrollbar>
        <FileList>
          {files.map(file => (
            <FileRow key={file.name}>
              <Icon name={file.icon} />
              <div>
                <div>{file.name}</div>
                <div>{file.kind}</div>
                {file.size && <div>{file.size}</div>}
              </div>
            </FileRow>
          ))}
        </FileList>
        <Scrollbar>
          <ScrollArrow><Arrow up /></ScrollArrow>
          <ScrollGrip $height={192} />
          <ScrollArrow><Arrow /></ScrollArrow>
        </Scrollbar>
      </Panes>
      <Form>
        <FormRow>
          File name:
          <Combo><Selected>screenshot_20240206_175057.png</Selected><ComboButton><Arrow /></ComboButton></Combo>
        </FormRow>
        <FormRow>
          Save as type:
          <Combo>PNG (*.png)<ComboButton><Arrow /></ComboButton></Combo>
        </FormRow>
      </Form>
      <Actions>
        <HideFolders><Icon name="hide" size={16} />Hide Folders</HideFolders>
        <ActionButton $primary>Save</ActionButton>
        <ActionButton>Cancel</ActionButton>
      </Actions>
      <Grip>
        <svg width="12" height="12" viewBox="0 0 12 12">
          <path d="M0 12L12 0M4 12l8-8M8 12l4-4" stroke="#fff" />
          <path d="M1.500 12L12 1.500M5.500 12L12 5.500M9.500 12L12 9.500" stroke="#808080" strokeWidth="1.300" />
        </svg>
      </Grip>
    </Dialog>
  );
}

function App() {
  return (
    <Screen>
      <GlobalStyle />
      <Browser />
      <SideButtons>
        <SideButton><LineIcon name="question" /></SideButton>
        <SideButton><LineIcon name="wrench" /></SideButton>
        <SideButton><LineIcon name="rocket" /></SideButton>
      </SideButtons>
      <CaptureArea />
      <Watermark>
        <svg width="198" height="66" viewBox="0 0 198 66">
          <g fill="#fff" fontFamily="Roboto, sans-serif" fontSize="50.500" fontWeight="500">
            <text x="2" y="51" textLength="64" lengthAdjust="spacingAndGlyphs">ANY</text>
            <text x="132" y="51" textLength="64" lengthAdjust="spacingAndGlyphs">RUN</text>
          </g>
          <g fill="none" stroke="#fff" strokeWidth="3.500" strokeLinejoin="round">
            <path d="M82 9l-3-1q-3 0-3 3v43q0 4 4 2l36-22" />
            <path d="M86 45V7q0-4 4-2l34 22q4 3 0 5l-3 2L91 17" />
            <path d="M86 56v3q1 4 5 1l33-21q4-3 0-5L92 17" />
          </g>
        </svg>
      </Watermark>
      <SaveDialog />
    </Screen>
  );
}

export default App;
